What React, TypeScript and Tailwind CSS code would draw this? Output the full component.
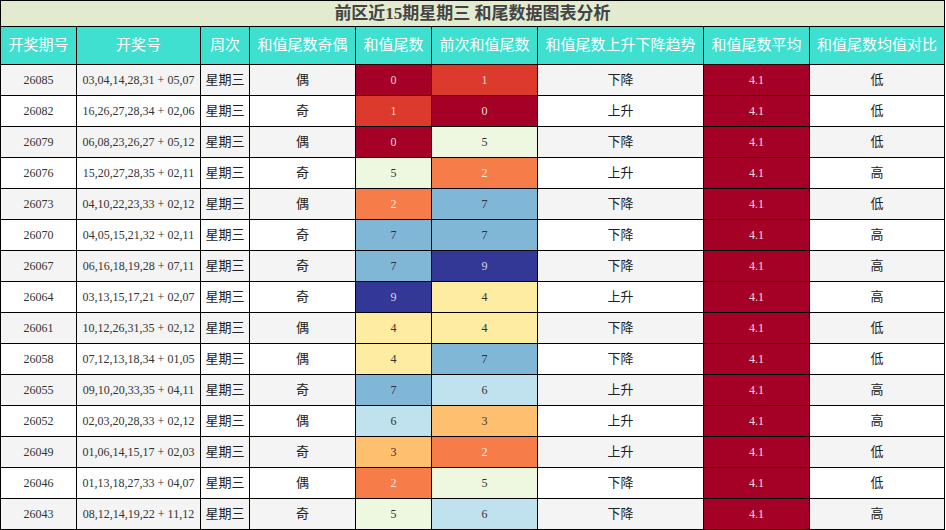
const FONT = { fontFamily: '"Liberation Serif", "Noto Sans CJK SC", serif' };

type Row = [string, string, string, number, number, string, string];

const ROWS: Row[] = [
  ['26085', '03,04,14,28,31 + 05,07', '偶', 0, 1, '下降', '低'],
  ['26082', '16,26,27,28,34 + 02,06', '奇', 1, 0, '上升', '低'],
  ['26079', '06,08,23,26,27 + 05,12', '偶', 0, 5, '下降', '低'],
  ['26076', '15,20,27,28,35 + 02,11', '奇', 5, 2, '上升', '高'],
  ['26073', '04,10,22,23,33 + 02,12', '偶', 2, 7, '下降', '低'],
  ['26070', '04,05,15,21,32 + 02,11', '奇', 7, 7, '下降', '高'],
  ['26067', '06,16,18,19,28 + 07,11', '奇', 7, 9, '下降', '高'],
  ['26064', '03,13,15,17,21 + 02,07', '奇', 9, 4, '上升', '高'],
  ['26061', '10,12,26,31,35 + 02,12', '偶', 4, 4, '下降', '低'],
  ['26058', '07,12,13,18,34 + 01,05', '偶', 4, 7, '下降', '低'],
  ['26055', '09,10,20,33,35 + 04,11', '奇', 7, 6, '上升', '高'],
  ['26052', '02,03,20,28,33 + 02,12', '偶', 6, 3, '上升', '高'],
  ['26049', '01,06,14,15,17 + 02,03', '奇', 3, 2, '上升', '低'],
  ['26046', '01,13,18,27,33 + 04,07', '偶', 2, 5, '下降', '低'],
  ['26043', '08,12,14,19,22 + 11,12', '奇', 5, 6, '下降', '高'],
];

// 尾数 → 色阶（红黄蓝）
const TAIL: Record<number, string> = {
  0: 'bg-[#a50026] text-[#e6dede]',
  1: 'bg-[#dc3a2c] text-[#f2dcd8]',
  2: 'bg-[#f67c4a] text-[#fbe9e0]',
  3: 'bg-[#fec06f] text-[#333]',
  4: 'bg-[#feeca1] text-[#333]',
  5: 'bg-[#eef7df] text-[#333]',
  6: 'bg-[#c0e2ee] text-[#333]',
  7: 'bg-[#80b6d6] text-[#333]',
  8: 'bg-[#4575b4] text-[#e6e6e6]',
  9: 'bg-[#333795] text-[#d6d6ec]',
};

const HEADERS = [
  '开奖期号',
  '开奖号',
  '周次',
  '和值尾数奇偶',
  '和值尾数',
  '前次和值尾数',
  '和值尾数上升下降趋势',
  '和值尾数平均',
  '和值尾数均值对比',
];

const cell = 'flex items-center justify-center border-r border-b border-black';

export default function App() {
  return (
    <div className="h-[530px] w-[946px] overflow-hidden bg-white" style={FONT}>
      <div className="grid w-[945px] grid-cols-[76px_124px_49px_106px_76px_106px_166px_106px_135px] border-l border-t border-black">
        <div className={`${cell} col-span-9 h-[26px] bg-[#e3ebcf] text-[17px] font-bold text-[#444]`}>
          前区近15期星期三 和尾数据图表分析
        </div>
        {HEADERS.map((h) => (
          <div key={h} className={`${cell} h-[38px] bg-[#40e0d0] text-[15px] text-white`}>
            {h}
          </div>
        ))}
        {ROWS.map(([no, nums, oe, tail, prev, trend, cmp], i) => {
          const bg = i % 2 === 0 ? 'bg-[#f4f4f4]' : 'bg-white';
          return [
            <div key={`${no}-a`} className={`${cell} ${bg} h-[31px] text-[12px] text-[#333]`}>{no}</div>,
            <div key={`${no}-b`} className={`${cell} ${bg} text-[12px] text-[#333]`}>{nums}</div>,
            <div key={`${no}-c`} className={`${cell} ${bg} text-[13px] text-[#222]`}>星期三</div>,
            <div key={`${no}-d`} className={`${cell} ${bg} text-[13px] text-[#222]`}>{oe}</div>,
            <div key={`${no}-e`} className={`${cell} ${TAIL[tail]} text-[12px]`}>{tail}</div>,
            <div key={`${no}-f`} className={`${cell} ${TAIL[prev]} text-[12px]`}>{prev}</div>,
            <div key={`${no}-g`} className={`${cell} ${bg} text-[13px] text-[#222]`}>{trend}</div>,
            <div key={`${no}-h`} className={`${cell} bg-[#a50026] text-[12px] text-[#e6dede]`}>4.1</div>,
            <div key={`${no}-i`} className={`${cell} ${bg} text-[13px] text-[#222]`}>{cmp}</div>,
          ];
        })}
      </div>
    </div>
  );
}
